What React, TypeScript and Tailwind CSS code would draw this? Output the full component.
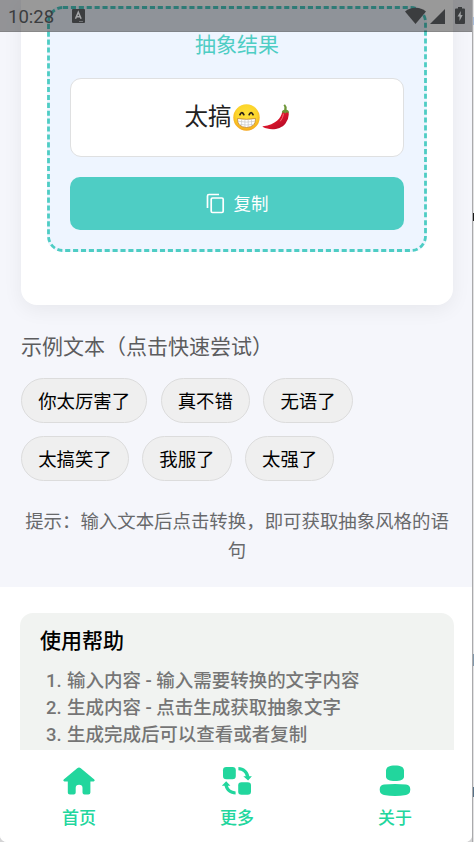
import React from "react";

const examples = ["你太厉害了", "真不错", "无语了", "太搞笑了", "我服了", "太强了"];
const steps = [
  "输入内容 - 输入需要转换的文字内容",
  "生成内容 - 点击生成获取抽象文字",
  "生成完成后可以查看或者复制",
];

function StatusBar() {
  return (
    <div className="absolute inset-x-0 top-0 z-10 flex h-8 items-center border-b border-black/10 bg-black/40 pl-2 text-[#3b3d3f]">
      <span className="w-16 pt-[2px] font-['Roboto',sans-serif] text-[18.500px] leading-8">10:28</span>
      <svg className="h-[14px] w-[13px]" viewBox="0 0 13 14">
        <rect width="13" height="14" rx="1" fill="currentColor" />
        <path d="M3.5 9.8 6.3 3.2 9.1 9.8M4.6 7.7h3.5" fill="none" stroke="#a4a6a8" strokeWidth="1.5" />
        <path d="M7 12.5h4" stroke="#727477" strokeWidth="1" />
      </svg>
      <svg className="ml-auto h-[17px] w-[21px]" viewBox="0 0 21 17">
        <path d="M0 4.5C6 -.4 15 -.4 21 4.5L10.5 17Z" fill="currentColor" />
      </svg>
      <svg className="mt-px ml-1 h-[15px] w-[15px]" viewBox="0 0 15 15">
        <path d="M15 0v15H0Z" fill="currentColor" />
      </svg>
      <svg className="mr-[7px] ml-[10px] h-[17px] w-[10px]" viewBox="0 0 10 17">
        <path d="M3 0h4v1.500h2q1 0 1 1V16q0 1-1 1H1q-1 0-1-1V2.500q0-1 1-1h2Z" fill="currentColor" />
        <path d="M5.800 4 2.500 9.500h2v4.500l3.200-6h-2Z" fill="#a0a2a4" />
      </svg>
    </div>
  );
}

function GrinEmoji() {
  return (
    <svg className="mb-px ml-px h-[27px] w-[27px]" viewBox="0 0 27 27">
      <defs>
        <radialGradient id="face" cx=".5" cy=".4" r=".6">
          <stop offset="0" stopColor="#ffe13a" />
          <stop offset=".65" stopColor="#fcd52b" />
          <stop offset="1" stopColor="#f4a51c" />
        </radialGradient>
      </defs>
      <circle cx="13.500" cy="13.500" r="13.200" fill="url(#face)" />
      <path d="M7 10.600q1.800-4 3.800 0M16.200 10.600q1.900-4 3.800 0" fill="none" stroke="#2c2118" strokeWidth="1.800" strokeLinecap="round" />
      <path d="M4.500 14.500q9 1.700 18 0q.5 8.500-9 9q-9.500-.5-9-9Z" fill="#fff" stroke="#c18436" strokeWidth=".8" />
      <path d="M5 17.300q8.500 1.600 17 0M6.200 20.300q7.300 1.400 14.600 0M8.600 15.300v6.500M11.900 15.600v7.600M15.200 15.600v7.600M18.500 15.300v6.500" fill="none" stroke="#c8c8c8" strokeWidth=".7" />
    </svg>
  );
}

function ChiliEmoji() {
  return (
    <svg className="mb-px ml-[2px] h-[26px] w-[28px]" viewBox="0 0 28 26">
      <defs>
        <linearGradient id="chili" x1="0" y1="0" x2="1" y2="1">
          <stop offset="0" stopColor="#e52235" />
          <stop offset=".55" stopColor="#d5142b" />
          <stop offset="1" stopColor="#a50725" />
        </linearGradient>
      </defs>
      <path d="M20.200 8C19 14 14 20.500 1 22.300q-.8.400 0 .8C7 26.300 18 26.500 23.500 19.500Q27.500 14 26.600 8.500Q23.500 5.500 20.200 8Z" fill="url(#chili)" />
      <path d="M21.500 10Q21 14 18.500 17" fill="none" stroke="#f66970" strokeWidth="1" strokeLinecap="round" />
      <path d="M22.200 5.800Q23.200 3 21.500 1.200L23 .2Q25.300 2.500 24.600 5.700Q27.500 6.300 26.800 9.500L25 8.300 23.300 9.600 21.500 8.200 20 9.300Q19.400 6.300 22.200 5.800Z" fill="#6d9637" />
    </svg>
  );
}

function HomeIcon() {
  return (
    <svg className="h-[34px] w-[34px]" viewBox="0 0 34 34" fill="#22d69d">
      <path d="M15.200 4.200q1.800-1.500 3.600 0L32.300 15.400q1.200 1.600-.7 2h-3.200v11q0 2.100-2.100 2.100h-3.800q-2 0-2-2v-4.700q0-3-3.400-3t-3.400 3v4.700q0 2-2 2H7.900q-2.100 0-2.100-2.100v-11H2.400q-1.900-.4-.7-2Z" />
    </svg>
  );
}

function MoreIcon() {
  return (
    <svg className="h-[34px] w-[34px]" viewBox="0 0 34 34" fill="#22d69d">
      <rect x="3" y="3" width="12.800" height="12.300" rx="3.300" />
      <rect x="18.200" y="18.200" width="12.800" height="12.600" rx="3.300" />
      <path d="M18.400 3.100C24 3.300 28.400 7 29.300 12.200h2.600L28.100 16.400 23.300 12.200h2.500Q24.600 6.700 18.400 6.200Z" />
      <path d="M15.600 30.500C10 30.300 5.600 26.700 4.500 21.700H1.800L6.200 17.300 10.400 21.700H7.900Q9.200 26.800 15.600 27.400Z" />
    </svg>
  );
}

function AboutIcon() {
  return (
    <svg className="h-[34px] w-[34px]" viewBox="0 0 34 34" fill="#22d69d">
      <path d="M8 6.500C8.400 2.900 11 1.500 17 1.500S25.600 2.900 26 6.500V13C25.500 15.800 22.500 17 17 17S8.500 15.800 8 13Z" />
      <path d="M1.700 25.500Q1.700 21 6 20.600Q17 19.400 28 20.600Q32.300 21 32.300 25.500T28 31Q17 33 6 31Q1.700 30.200 1.700 25.500Z" />
    </svg>
  );
}

const tabs = [
  { label: "首页", icon: <HomeIcon /> },
  { label: "更多", icon: <MoreIcon /> },
  { label: "关于", icon: <AboutIcon /> },
];

export default function App() {
  return (
    <div className="flex h-[842px] w-[474px] overflow-hidden bg-[#d4d4d5] font-['Roboto','Noto_Sans_CJK_SC',sans-serif]">
      <div className="relative flex h-[842px] w-[472px] shrink-0 flex-col overflow-hidden rounded-b-[7px] bg-white">
        <StatusBar />
        <main className="flex h-[750px] shrink-0 flex-col overflow-hidden">
          <div className="h-[587px] shrink-0 overflow-hidden bg-[#f5f6fb] pr-[19px] pl-[21px]">
            <section className="h-[304.500px] rounded-b-[16px] bg-white px-[26px] pt-[6px] shadow-[0_5px_20px_rgba(0,0,0,0.06)]">
              <div className="relative h-[246px] rounded-[15px] bg-[#eef5ff] px-[23px] pt-6">
                <svg className="absolute inset-0 h-full w-full" viewBox="0 0 380 246" fill="none">
                  <rect x="1.500" y="1.500" width="377" height="243" rx="14.500" stroke="#4ecdc4" strokeWidth="2.800" strokeDasharray="5.100 2.800" />
                </svg>
                <h2 className="text-center text-[21px] leading-[30px] text-[#4ecdc4]">抽象结果</h2>
                <div className="mt-[18px] flex h-[79px] items-center justify-center rounded-[11px] border border-[#dfe0e1] bg-white text-[23.600px] text-[#222]">
                  <span className="pt-px">太搞</span>
                  <GrinEmoji />
                  <ChiliEmoji />
                </div>
                <button className="mt-5 flex h-[52.500px] w-full items-center justify-center gap-[9px] rounded-[10px] bg-[#4ecdc4] text-[17.500px] text-white">
                  <svg className="h-[21px] w-[19px]" viewBox="0 0 19 21" fill="none" stroke="white" strokeWidth="1.700">
                    <path d="M1.500 15V3q0-1.500 1.500-1.500h10" />
                    <rect x="5.200" y="5" width="12" height="14.500" rx="1.300" />
                  </svg>
                  <span className="pt-[2px]">复制</span>
                </button>
              </div>
            </section>
            <h3 className="mt-[27px] text-[21px] leading-[30px] text-[#5c5c5e]">示例文本（点击快速尝试）</h3>
            <div className="mt-[16px] flex flex-wrap gap-[13.200px]">
              {examples.map((text) => (
                <button key={text} className="h-[45.300px] rounded-full border border-[#dcdcdc] bg-[#efefef] px-[16.200px] pt-[3px] text-[18.400px] leading-[26px] text-black">
                  {text}
                </button>
              ))}
            </div>
            <p className="-mr-px -ml-px mt-[26px] text-center text-[18.430px] leading-[29px] text-[#68696b]">
              提示：输入文本后点击转换，即可获取抽象风格的语句
            </p>
          </div>
          <section className="mt-[26px] mr-[18px] ml-5 h-[180px] shrink-0 rounded-[13px] bg-[#f1f3f1] px-5 pt-3">
            <h3 className="text-[21px] leading-[32px] font-medium text-black">使用帮助</h3>
            <ol className="mt-[11px] pl-[6px] text-[18.480px] leading-[27px] font-medium text-[#757575]">
              {steps.map((step, i) => (
                <li key={step} className="flex">
                  <span className="w-[21px] shrink-0">{i + 1}.</span>
                  <span>{step}</span>
                </li>
              ))}
            </ol>
          </section>
        </main>
        <nav className="-mr-[2px] grid h-[92px] shrink-0 grid-cols-3 bg-white pt-[14px]">
          {tabs.map((tab) => (
            <button key={tab.label} className="flex flex-col items-center text-[17px] font-medium text-[#22d69d]">
              {tab.icon}
              <span className="mt-2 leading-[24px]">{tab.label}</span>
            </button>
          ))}
        </nav>
      </div>
      <aside className="flex h-full w-[2px] shrink-0 flex-col border-l border-[#aaaaac] bg-[#e2e2e3]">
        <div className="mt-[17px] h-[8px] bg-[#a9bddb]" />
        <div className="mt-[188px] h-2 bg-[#181818]" />
        <div className="mt-[433px] h-[12px] bg-[#8298ab]" />
        <div className="mt-[121px] h-[10px] bg-[#577187]" />
      </aside>
    </div>
  );
}
